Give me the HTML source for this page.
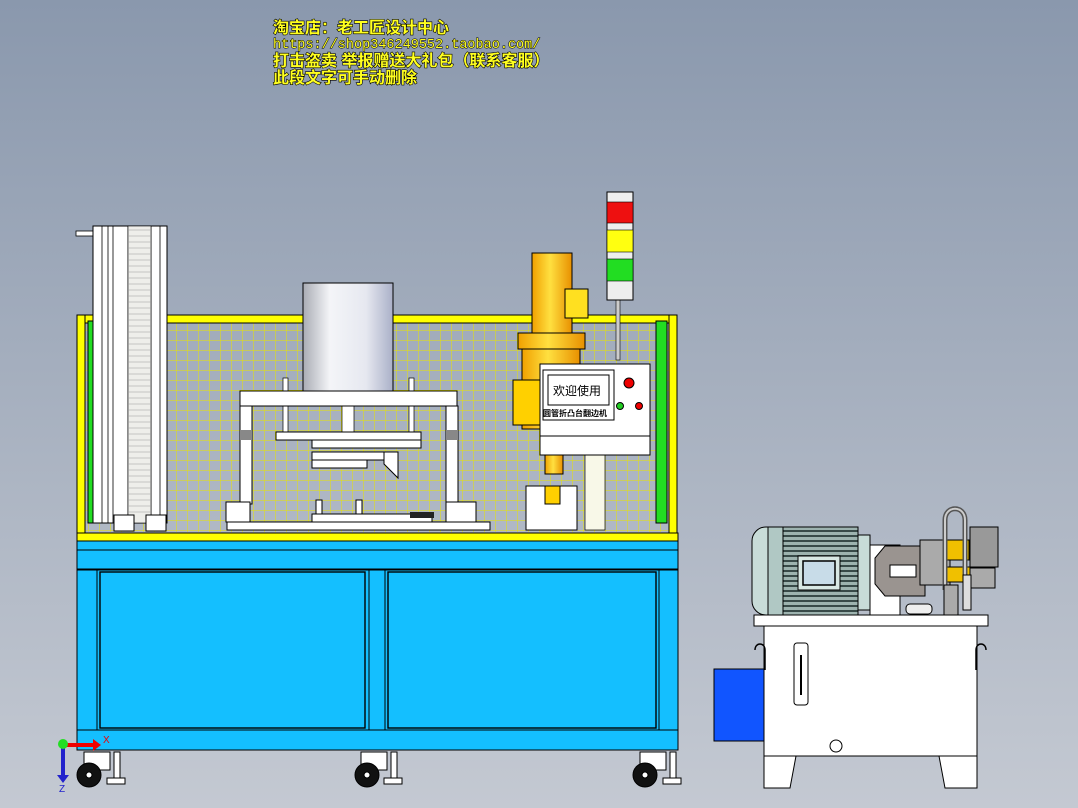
<!DOCTYPE html>
<html><head><meta charset="utf-8"><style>
html,body{margin:0;padding:0;width:1078px;height:808px;overflow:hidden}
svg{display:block}
.t{font-family:"Liberation Sans","Noto Sans CJK SC",sans-serif;font-size:16px;font-weight:bold;fill:#ffff20;stroke:#000;stroke-width:1.2px;paint-order:stroke}
.m{font-family:"Liberation Mono",monospace;font-size:13.5px;fill:#ffff20;stroke:#000;stroke-width:1px;paint-order:stroke}
</style></head><body>
<svg width="1078" height="808" viewBox="0 0 1078 808" xmlns="http://www.w3.org/2000/svg">
<defs>
<linearGradient id="bg" x1="0" y1="0" x2="0" y2="1"><stop offset="0" stop-color="#8a98ad"/><stop offset="1" stop-color="#c4c9d2"/></linearGradient>
<linearGradient id="cyl" x1="0" x2="1"><stop offset="0" stop-color="#a9acb4"/><stop offset=".3" stop-color="#f4f5f8"/><stop offset=".7" stop-color="#e6e8f0"/><stop offset="1" stop-color="#aab0c8"/></linearGradient>
<linearGradient id="or" x1="0" x2="1"><stop offset="0" stop-color="#f0a000"/><stop offset=".45" stop-color="#ffe040"/><stop offset="1" stop-color="#e89000"/></linearGradient>
<pattern id="mesh" width="11" height="10" patternUnits="userSpaceOnUse"><path d="M0 0H11M0 0V10" stroke="#e8e400" stroke-width="1" fill="none"/></pattern>
<pattern id="fin" width="4" height="5" patternUnits="userSpaceOnUse"><rect width="4" height="5" fill="#9db3af"/><rect width="4" height="2" fill="#384a48"/></pattern>
</defs>
<rect width="1078" height="808" fill="url(#bg)"/>
<text class="t" x="273" y="33">淘宝店：老工匠设计中心</text>
<text class="m" x="273" y="48">https://shop346249552.taobao.com/</text>
<text class="t" x="273" y="66">打击盗卖 举报赠送大礼包（联系客服）</text>
<text class="t" x="273" y="83">此段文字可手动删除</text>

<rect x="84" y="322" width="588" height="210" fill="url(#mesh)"/>
<rect x="77" y="315" width="600" height="8" fill="#ffff00" stroke="#000" stroke-width="1"/>
<rect x="77" y="315" width="8" height="218" fill="#ffff00" stroke="#000"/>
<rect x="669" y="315" width="8" height="218" fill="#ffff00" stroke="#000"/>
<rect x="88" y="321" width="10" height="202" fill="#22dd22" stroke="#000"/>
<rect x="656" y="321" width="11" height="202" fill="#22dd22" stroke="#000"/>
<rect x="76" y="231" width="20" height="5" fill="#fff" stroke="#000" stroke-width=".8"/>
<rect x="93" y="226" width="74" height="297" fill="#fff" stroke="#000"/>
<path d="M102 226V523M108 226V523M113 226V523M128 226V523M151 226V523M160 226V523" stroke="#000" stroke-width=".8"/>
<rect x="128" y="226" width="23" height="297" fill="#eeeeea" stroke="#000" stroke-width=".6"/>
<path d="M128 230H151M128 236H151M128 242H151M128 248H151M128 254H151M128 260H151M128 266H151M128 272H151M128 278H151M128 284H151M128 290H151M128 296H151M128 302H151M128 308H151M128 314H151M128 320H151M128 326H151M128 332H151M128 338H151M128 344H151M128 350H151M128 356H151M128 362H151M128 368H151M128 374H151M128 380H151M128 386H151M128 392H151M128 398H151M128 404H151M128 410H151M128 416H151M128 422H151M128 428H151M128 434H151M128 440H151M128 446H151M128 452H151M128 458H151M128 464H151M128 470H151M128 476H151M128 482H151M128 488H151M128 494H151M128 500H151M128 506H151M128 512H151" stroke="#999" stroke-width=".6"/>
<rect x="114" y="515" width="20" height="16" fill="#fff" stroke="#000"/><rect x="146" y="515" width="20" height="16" fill="#fff" stroke="#000"/>

<rect x="303" y="283" width="90" height="109" fill="url(#cyl)" stroke="#000"/>
<rect x="283" y="378" width="5" height="55" fill="#fff" stroke="#000" stroke-width=".7"/>
<rect x="409" y="378" width="5" height="55" fill="#fff" stroke="#000" stroke-width=".7"/>
<rect x="342" y="406" width="12" height="35" fill="#fff" stroke="#000" stroke-width=".7"/>
<rect x="240" y="391" width="217" height="15" fill="#fff" stroke="#000"/>
<rect x="240" y="406" width="12" height="98" fill="#fff" stroke="#000"/>
<rect x="446" y="406" width="12" height="98" fill="#fff" stroke="#000"/>
<rect x="240" y="430" width="12" height="10" fill="#888"/><rect x="446" y="430" width="12" height="10" fill="#888"/>
<rect x="276" y="432" width="145" height="8" fill="#fff" stroke="#000"/>
<rect x="312" y="440" width="109" height="8" fill="#fff" stroke="#000"/>
<rect x="312" y="452" width="73" height="8" fill="#fff" stroke="#000"/>
<rect x="312" y="460" width="55" height="8" fill="#fff" stroke="#000"/>
<path d="M384 452h14v26l-14-14z" fill="#fff" stroke="#000"/>
<rect x="226" y="502" width="24" height="20" fill="#fff" stroke="#000"/>
<rect x="446" y="502" width="30" height="20" fill="#fff" stroke="#000"/>
<rect x="227" y="522" width="263" height="8" fill="#fff" stroke="#000"/>
<rect x="312" y="514" width="120" height="8" fill="#fff" stroke="#000"/>
<rect x="316" y="500" width="6" height="14" fill="#fff" stroke="#000"/><rect x="356" y="500" width="6" height="14" fill="#fff" stroke="#000"/>
<rect x="410" y="512" width="24" height="6" fill="#222"/>

<rect x="532" y="253" width="40" height="82" fill="url(#or)" stroke="#000"/>
<rect x="565" y="289" width="23" height="29" fill="#ffe020" stroke="#000"/>
<rect x="518" y="333" width="67" height="16" fill="url(#or)" stroke="#000"/>
<rect x="522" y="349" width="58" height="80" fill="url(#or)" stroke="#000"/>
<rect x="513" y="380" width="28" height="45" fill="#ffd000" stroke="#000"/>
<rect x="545" y="429" width="18" height="45" fill="url(#or)" stroke="#000"/>
<rect x="526" y="486" width="51" height="44" fill="#fff" stroke="#000"/>
<rect x="545" y="486" width="15" height="18" fill="#ffd000" stroke="#000"/>
<rect x="585" y="455" width="20" height="75" fill="#f8f8e8" stroke="#000" stroke-width=".7"/>
<rect x="616" y="298" width="4" height="62" fill="#ccc" stroke="#000" stroke-width=".6"/>
<rect x="607" y="192" width="26" height="108" fill="#eee" stroke="#000"/>
<rect x="607" y="202" width="26" height="21" fill="#ee1010" stroke="#000" stroke-width=".6"/>
<rect x="607" y="230" width="26" height="22" fill="#ffff10" stroke="#000" stroke-width=".6"/>
<rect x="607" y="259" width="26" height="22" fill="#22dd22" stroke="#000" stroke-width=".6"/>
<rect x="540" y="364" width="110" height="91" fill="#fff" stroke="#000"/>
<path d="M540 436H650" stroke="#000"/>
<rect x="543" y="370" width="71" height="50" fill="#fff" stroke="#000"/>
<rect x="548" y="375" width="61" height="30" fill="#fff" stroke="#000"/>
<text x="553" y="395" font-family="Liberation Sans,Noto Sans CJK SC,sans-serif" font-size="12" fill="#000">欢迎使用</text>
<text x="543" y="416" font-family="Liberation Sans,Noto Sans CJK SC,sans-serif" font-size="8" font-weight="bold" fill="#000">圆管折凸台翻边机</text>
<circle cx="629" cy="383" r="5" fill="#e00" stroke="#000"/>
<circle cx="620" cy="406" r="3.5" fill="#2c2" stroke="#000"/>
<circle cx="639" cy="406" r="3.5" fill="#e00" stroke="#000"/>

<rect x="77" y="533" width="601" height="8" fill="#ffff00" stroke="#000"/>
<rect x="77" y="541" width="601" height="9" fill="#14bfff" stroke="#000"/>
<rect x="77" y="550" width="601" height="19" fill="#14bfff" stroke="#000"/>
<rect x="77" y="570" width="601" height="160" fill="#14bfff" stroke="#000"/>
<rect x="100" y="572" width="265" height="156" fill="#14bfff" stroke="#000" stroke-width="1.4"/>
<rect x="388" y="572" width="268" height="156" fill="#14bfff" stroke="#000" stroke-width="1.4"/>
<path d="M97 570V730M369 570V730M385 570V730M659 570V730" stroke="#000"/>
<rect x="77" y="730" width="601" height="20" fill="#14bfff" stroke="#000"/>
<g fill="#fff" stroke="#000">
<rect x="84" y="752" width="26" height="18"/><circle cx="89" cy="775" r="12" fill="#111"/><circle cx="89" cy="775" r="3"/><rect x="114" y="752" width="6" height="26"/><rect x="107" y="778" width="18" height="6"/>
<rect x="361" y="752" width="26" height="18"/><circle cx="367" cy="775" r="12" fill="#111"/><circle cx="367" cy="775" r="3"/><rect x="391" y="752" width="6" height="26"/><rect x="384" y="778" width="18" height="6"/>
<rect x="640" y="752" width="26" height="18"/><circle cx="645" cy="775" r="12" fill="#111"/><circle cx="645" cy="775" r="3"/><rect x="670" y="752" width="6" height="26"/><rect x="663" y="778" width="18" height="6"/>
</g>
<path d="M63 745H93" stroke="#e00" stroke-width="4"/><path d="M93 739l8 6-8 6z" fill="#e00"/>
<path d="M63 745V775" stroke="#22c" stroke-width="4"/><path d="M57 775l6 8 6-8z" fill="#22c"/>
<circle cx="63" cy="744" r="5" fill="#2d2"/>
<text x="103" y="743" font-size="10" fill="#e00" font-family="Liberation Sans,sans-serif">X</text>
<text x="59" y="792" font-size="10" fill="#22c" font-family="Liberation Sans,sans-serif">Z</text>

<rect x="714" y="669" width="50" height="72" fill="#1155ff" stroke="#000"/>
<rect x="764" y="626" width="213" height="130" fill="#fff" stroke="#000"/>
<path d="M764 756h213v32h-32l-6-32M764 756v32h26l6-32" fill="#fff" stroke="#000"/>
<path d="M755 650c0-8 10-8 10 0v20M986 650c0-8-10-8-10 0v20" fill="none" stroke="#000" stroke-width="1.5"/>
<rect x="794" y="643" width="14" height="62" rx="3" fill="#fff" stroke="#000"/><path d="M801 655V695" stroke="#000" stroke-width="2"/>
<circle cx="836" cy="746" r="6" fill="#fff" stroke="#000"/>
<rect x="754" y="615" width="234" height="11" fill="#fff" stroke="#000"/>
<rect x="752" y="527" width="32" height="88" rx="14" fill="#c8dcd8" stroke="#000"/>
<rect x="768" y="527" width="20" height="88" fill="#b0c8c4" stroke="#000"/>
<rect x="783" y="527" width="75" height="88" fill="url(#fin)" stroke="#000"/>
<rect x="798" y="556" width="42" height="34" fill="#d8e8e4" stroke="#000"/>
<rect x="803" y="561" width="32" height="24" fill="#c8dce8" stroke="#000" stroke-width="1.5"/>
<rect x="858" y="535" width="12" height="75" fill="#c8dcd8" stroke="#000"/>
<rect x="870" y="545" width="30" height="70" fill="#fff" stroke="#000"/>
<path d="M885 546h40v50h-40l-10-12v-26z" fill="#9a9490" stroke="#000"/>
<rect x="890" y="565" width="26" height="12" fill="#fff" stroke="#000"/>
<rect x="920" y="540" width="30" height="45" fill="#aaa" stroke="#000"/>
<rect x="944" y="540" width="25" height="20" fill="#f0c000" stroke="#000"/>
<rect x="945" y="567" width="25" height="15" fill="#f0c000" stroke="#000"/>
<rect x="970" y="527" width="28" height="40" fill="#999" stroke="#000"/>
<rect x="970" y="568" width="25" height="20" fill="#aaa" stroke="#000"/>
<path d="M945 590V520c0-15 20-15 20 0v55" fill="none" stroke="#555" stroke-width="5"/>
<path d="M945 590V520c0-15 20-15 20 0v55" fill="none" stroke="#ccc" stroke-width="2"/>
<rect x="944" y="585" width="14" height="30" fill="#aaa" stroke="#000"/>
<rect x="963" y="575" width="8" height="35" fill="#ddd" stroke="#000"/>
<rect x="906" y="604" width="26" height="10" rx="4" fill="#eee" stroke="#000"/>
</svg>
</body></html>
